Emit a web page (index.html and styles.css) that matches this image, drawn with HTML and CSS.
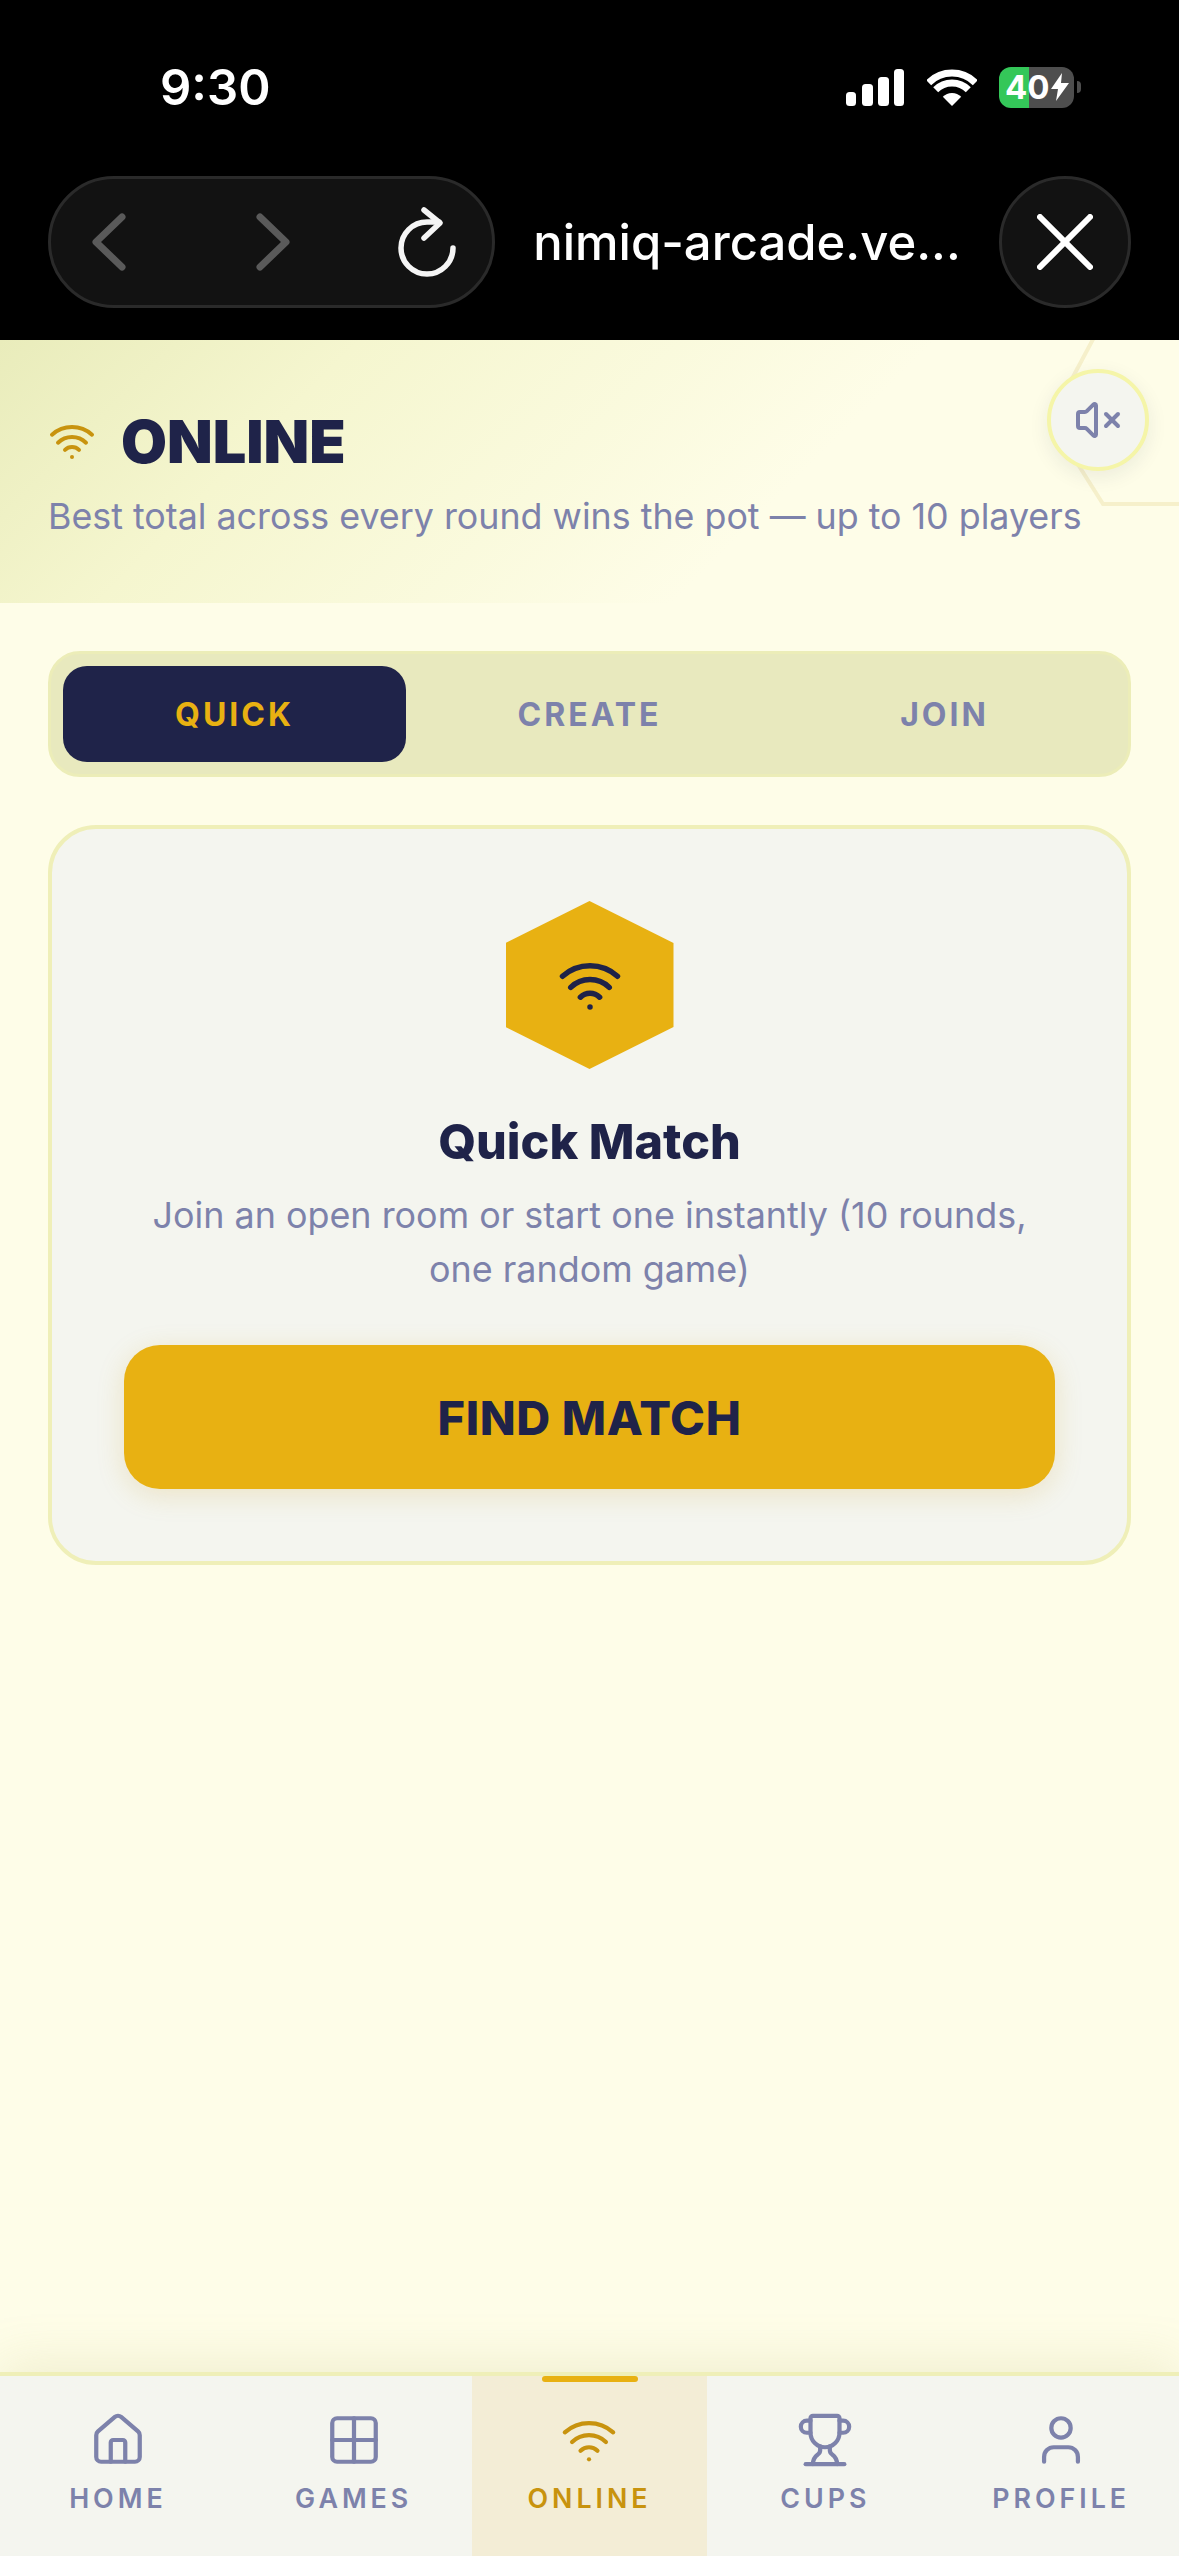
FILE: index.html
```html
<!DOCTYPE html>
<html>
<head>
	<title>Online</title>
	<meta charset="utf-8">
	<meta name="viewport" content="width=device-width, initial-scale=1">
	<link rel="stylesheet" href="styles.css">
</head>
<body>

	<div class="phone_top">
		<div class="status">
			<span class="time">9:30</span>
			<div class="status_icons">
				<svg class="signal" viewBox="0 0 58 37" fill="#fff">
					<rect x="0" y="23" width="10" height="14" rx="3.5"/>
					<rect x="16" y="15" width="11" height="22" rx="3.5"/>
					<rect x="32" y="8" width="11" height="29" rx="3.5"/>
					<rect x="48" y="0" width="10" height="37" rx="3.5"/>
				</svg>
				<svg class="status_wifi" viewBox="0 0 50 37" fill="none" stroke="#fff" stroke-width="7">
					<path d="M1.7 13.7A33 33 0 0 1 48.3 13.7"/>
					<path d="M8.7 20.7A23 23 0 0 1 41.3 20.7"/>
					<path d="M25 37L15.8 27.8A13 13 0 0 1 34.2 27.8Z" fill="#fff" stroke="none"/>
				</svg>
				<div class="battery">
					<span>40</span>
					<svg class="bolt" viewBox="0 0 18 28" fill="#fff"><path d="M11 0L0 16h7l-2 12L18 10h-8z"/></svg>
				</div>
				<div class="battery_nub"></div>
			</div>
		</div>
		<div class="browser_bar">
			<div class="nav_pill">
				<svg class="chev" viewBox="0 0 36 60"><path d="M30 5L4 30l26 25"/></svg>
				<svg class="chev next" viewBox="0 0 36 60"><path d="M6 5l26 25L6 55"/></svg>
				<svg class="reload" viewBox="0 0 64 72" fill="none" stroke="#f5f5f5" stroke-width="5.5" stroke-linecap="round" stroke-linejoin="round">
					<path d="M58 42A26 26 0 1 1 32 16H44"/>
					<path d="M29 4L45 17 29 32"/>
				</svg>
			</div>
			<div class="url">nimiq-arcade.ve...</div>
			<div class="close_btn">
				<svg viewBox="0 0 56 56" fill="none" stroke="#fff" stroke-width="6" stroke-linecap="round"><path d="M3 3l50 50M53 3L3 53"/></svg>
			</div>
		</div>
	</div>

	<div class="main">
		<div class="page_head">
			<svg class="head_hex" viewBox="0 0 139 263" fill="none" stroke="#f6f0cb" stroke-width="4"><path d="M59 -12L10 80l53 84h80"/></svg>
			<div class="title_row">
				<svg class="ico head_ico" viewBox="0 0 24 24"><path d="M12 20h.01"/><path d="M2 8.82a15 15 0 0 1 20 0"/><path d="M5 12.859a10 10 0 0 1 14 0"/><path d="M8.5 16.429a5 5 0 0 1 7 0"/></svg>
				<h1>ONLINE</h1>
			</div>
			<p class="sub">Best total across every round wins the pot — up to 10 players</p>
			<button class="mute">
				<svg class="ico" viewBox="0 0 24 24"><path d="M11 4.702a.705.705 0 0 0-1.203-.498L6.413 7.587A1.4 1.4 0 0 1 5.416 8H3a1 1 0 0 0-1 1v6a1 1 0 0 0 1 1h2.416a1.4 1.4 0 0 1 .997.413l3.383 3.384A.705.705 0 0 0 11 19.298z"/><path d="M22 9l-6 6"/><path d="M16 9l6 6"/></svg>
			</button>
		</div>

		<div class="content">
			<div class="tabs">
				<div class="tab active">QUICK</div>
				<div class="tab">CREATE</div>
				<div class="tab">JOIN</div>
			</div>

			<div class="card">
				<div class="hex">
					<svg class="ico" viewBox="0 0 24 24"><path d="M12 20h.01"/><path d="M2 8.82a15 15 0 0 1 20 0"/><path d="M5 12.859a10 10 0 0 1 14 0"/><path d="M8.5 16.429a5 5 0 0 1 7 0"/></svg>
				</div>
				<h2>Quick Match</h2>
				<p class="card_text">Join an open room or start one instantly (10 rounds, one random game)</p>
				<button class="find">FIND MATCH</button>
			</div>
		</div>
	</div>

	<div class="bottom_nav">
		<div class="nav_item">
			<svg class="ico" viewBox="0 0 24 24"><path d="M15 21v-8a1 1 0 0 0-1-1h-4a1 1 0 0 0-1 1v8"/><path d="M3 10a2 2 0 0 1 .709-1.528l7-5.999a2 2 0 0 1 2.582 0l7 5.999A2 2 0 0 1 21 10v9a2 2 0 0 1-2 2H5a2 2 0 0 1-2-2z"/></svg>
			<span>HOME</span>
		</div>
		<div class="nav_item">
			<svg class="ico" viewBox="0 0 24 24"><rect x="3" y="3" width="18" height="18" rx="2"/><path d="M3 12h18"/><path d="M12 3v18"/></svg>
			<span>GAMES</span>
		</div>
		<div class="nav_item current">
			<svg class="ico" viewBox="0 0 24 24"><path d="M12 20h.01"/><path d="M2 8.82a15 15 0 0 1 20 0"/><path d="M5 12.859a10 10 0 0 1 14 0"/><path d="M8.5 16.429a5 5 0 0 1 7 0"/></svg>
			<span>ONLINE</span>
		</div>
		<div class="nav_item">
			<svg class="ico" viewBox="0 0 24 24"><path d="M10 14.66v1.626a2 2 0 0 1-.976 1.696A5 5 0 0 0 7 21.978"/><path d="M14 14.66v1.626a2 2 0 0 0 .976 1.696A5 5 0 0 1 17 21.978"/><path d="M18 9h1.5a1 1 0 0 0 0-5H18"/><path d="M4 22h16"/><path d="M6 9a6 6 0 0 0 12 0V3a1 1 0 0 0-1-1H7a1 1 0 0 0-1 1z"/><path d="M6 9H4.5a1 1 0 0 1 0-5H6"/></svg>
			<span>CUPS</span>
		</div>
		<div class="nav_item">
			<svg class="ico" viewBox="0 0 24 24"><path d="M19 21v-2a4 4 0 0 0-4-4H9a4 4 0 0 0-4 4v2"/><circle cx="12" cy="7" r="4"/></svg>
			<span>PROFILE</span>
		</div>
	</div>

</body>
</html>
```

FILE: styles.css
```css
* {
	box-sizing: border-box;
}

body {
	font-family: Inter, "Liberation Sans", sans-serif;
	margin: 0px;
	padding: 0px;
	width: 1179px;
	height: 2556px;
	display: flex;
	flex-direction: column;
	background: #fefde8;
	color: #1f2349;
	overflow: hidden;
}

h1, h2, p {
	margin: 0px;
}

button {
	border: 0px;
	padding: 0px;
	font-family: inherit;
	cursor: pointer;
}

.ico {
	fill: none;
	stroke: currentColor;
	stroke-width: 2;
	stroke-linecap: round;
	stroke-linejoin: round;
}

/* phone status bar and in-app browser bar */
.phone_top {
	height: 340px;
	background: #000;
	color: #fff;
}

.status {
	height: 176px;
	padding: 0px 98px 2px 160px;
	display: flex;
	justify-content: space-between;
	align-items: center;
}

.time {
	font-size: 49px;
	font-weight: 600;
}

.status_icons {
	display: flex;
	align-items: center;
}

.signal {
	width: 58px;
	height: 37px;
	margin-right: 23px;
}

.status_wifi {
	width: 50px;
	height: 37px;
	margin-right: 22px;
}

.battery {
	width: 75px;
	height: 41px;
	padding-left: 6px;
	border-radius: 12px;
	background: linear-gradient(90deg, #34c759 30px, #4e4e4e 30px);
	display: flex;
	align-items: center;
	font-size: 33px;
	font-weight: 700;
}

.bolt {
	width: 18px;
	height: 28px;
	margin-left: 1px;
}

.battery_nub {
	width: 4px;
	height: 12px;
	margin-left: 3px;
	border-radius: 0px 6px 6px 0px;
	background: #4e4e4e;
}

.browser_bar {
	height: 132px;
	padding: 0px 48px;
	display: flex;
	align-items: center;
}

.nav_pill {
	width: 447px;
	height: 132px;
	padding-left: 41px;
	border: 3px solid #2a2a2a;
	border-radius: 66px;
	background: #121212;
	display: flex;
	align-items: center;
}

.chev {
	width: 36px;
	height: 60px;
	fill: none;
	stroke: #5a5a5a;
	stroke-width: 7;
	stroke-linecap: round;
	stroke-linejoin: round;
}

.chev.next {
	margin-left: 126px;
}

.reload {
	width: 64px;
	height: 72px;
	margin-left: 105px;
}

.url {
	flex: 1;
	text-align: center;
	font-size: 49px;
	font-weight: 500;
	white-space: nowrap;
}

.close_btn {
	width: 132px;
	height: 132px;
	border: 3px solid #2a2a2a;
	border-radius: 50%;
	background: #121212;
	display: flex;
	justify-content: center;
	align-items: center;
}

.close_btn svg {
	width: 56px;
	height: 56px;
}

/* page */
.main {
	flex: 1;
}

.page_head {
	position: relative;
	height: 263px;
	padding: 67px 48px 0px;
	background: linear-gradient(135deg, #e9ecbb 0%, #f5f6cf 25%, #fefde8 65%);
	overflow: hidden;
}

.head_hex {
	position: absolute;
	top: 0px;
	right: 0px;
	width: 139px;
	height: 263px;
}

.title_row {
	position: relative;
	display: flex;
	align-items: center;
	gap: 25px;
}

.head_ico {
	width: 48px;
	height: 48px;
	color: #c8930e;
}

h1 {
	font-size: 59.4px;
	line-height: 68px;
	font-weight: 900;
}

.sub {
	position: relative;
	margin-top: 19px;
	font-size: 35.8px;
	line-height: 44px;
	color: #7d82ab;
	white-space: nowrap;
}

.mute {
	position: absolute;
	top: 29px;
	right: 30px;
	width: 102px;
	height: 102px;
	border: 4px solid #f5f5a8;
	border-radius: 50%;
	background: #f4f5ef;
	color: #7d82ab;
	box-shadow: 0px 6px 20px rgba(31, 35, 73, 0.08);
	display: flex;
	justify-content: center;
	align-items: center;
}

.mute svg {
	width: 48px;
	height: 48px;
}

.content {
	padding: 48px 48px 0px;
}

.tabs {
	height: 126px;
	padding: 12px;
	border: 3px solid #ecedb8;
	border-radius: 32px;
	background: #e8e9be;
	display: grid;
	grid-template-columns: 1fr 1fr 1fr;
	gap: 12px;
}

.tab {
	border-radius: 24px;
	display: flex;
	justify-content: center;
	align-items: center;
	font-size: 32px;
	font-weight: 700;
	letter-spacing: 3px;
	color: #7d82ab;
}

.tab.active {
	background: #1f2349;
	color: #e8b112;
}

.card {
	margin-top: 48px;
	height: 740px;
	padding: 72px 72px;
	border: 4px solid #efefb8;
	border-radius: 48px;
	background: #f4f5ef;
	display: flex;
	flex-direction: column;
	align-items: center;
}

.hex {
	width: 168px;
	height: 168px;
	background: #e8b112;
	clip-path: polygon(50% 0%, 100% 25%, 100% 75%, 50% 100%, 0% 75%, 0% 25%);
	display: flex;
	justify-content: center;
	align-items: center;
}

.hex svg {
	width: 66px;
	height: 66px;
}

h2 {
	margin-top: 44px;
	font-size: 48.5px;
	line-height: 58px;
	font-weight: 800;
}

.card_text {
	margin-top: 17px;
	width: 900px;
	text-align: center;
	font-size: 35.9px;
	line-height: 54px;
	color: #7d82ab;
}

.find {
	margin-top: 49px;
	width: 100%;
	height: 144px;
	flex-shrink: 0;
	border-radius: 36px;
	background: #e8b112;
	color: #1f2349;
	font-size: 47px;
	font-weight: 800;
	letter-spacing: 0.6px;
	box-shadow: 0px 6px 28px rgba(200, 147, 14, 0.18);
}

/* bottom tabs */
.bottom_nav {
	height: 184px;
	border-top: 4px solid #efefb8;
	background: #f4f5ef;
	box-shadow: 0px -8px 48px rgba(180, 170, 90, 0.18);
	display: grid;
	grid-template-columns: repeat(5, 1fr);
	position: relative;
}

.nav_item {
	position: relative;
	padding-top: 35px;
	display: flex;
	flex-direction: column;
	align-items: center;
	color: #7d82ab;
}

.nav_item svg {
	width: 58px;
	height: 58px;
	stroke-width: 1.75;
}

.nav_item span {
	margin-top: 11px;
	font-size: 26.8px;
	line-height: 36px;
	font-weight: 600;
	letter-spacing: 4px;
}

.nav_item.current {
	background: #f3edd6;
	color: #c8930e;
}

.nav_item.current::before {
	content: "";
	position: absolute;
	top: 0px;
	left: 70px;
	width: 96px;
	height: 6px;
	border-radius: 3px;
	background: #e8b112;
}
```
